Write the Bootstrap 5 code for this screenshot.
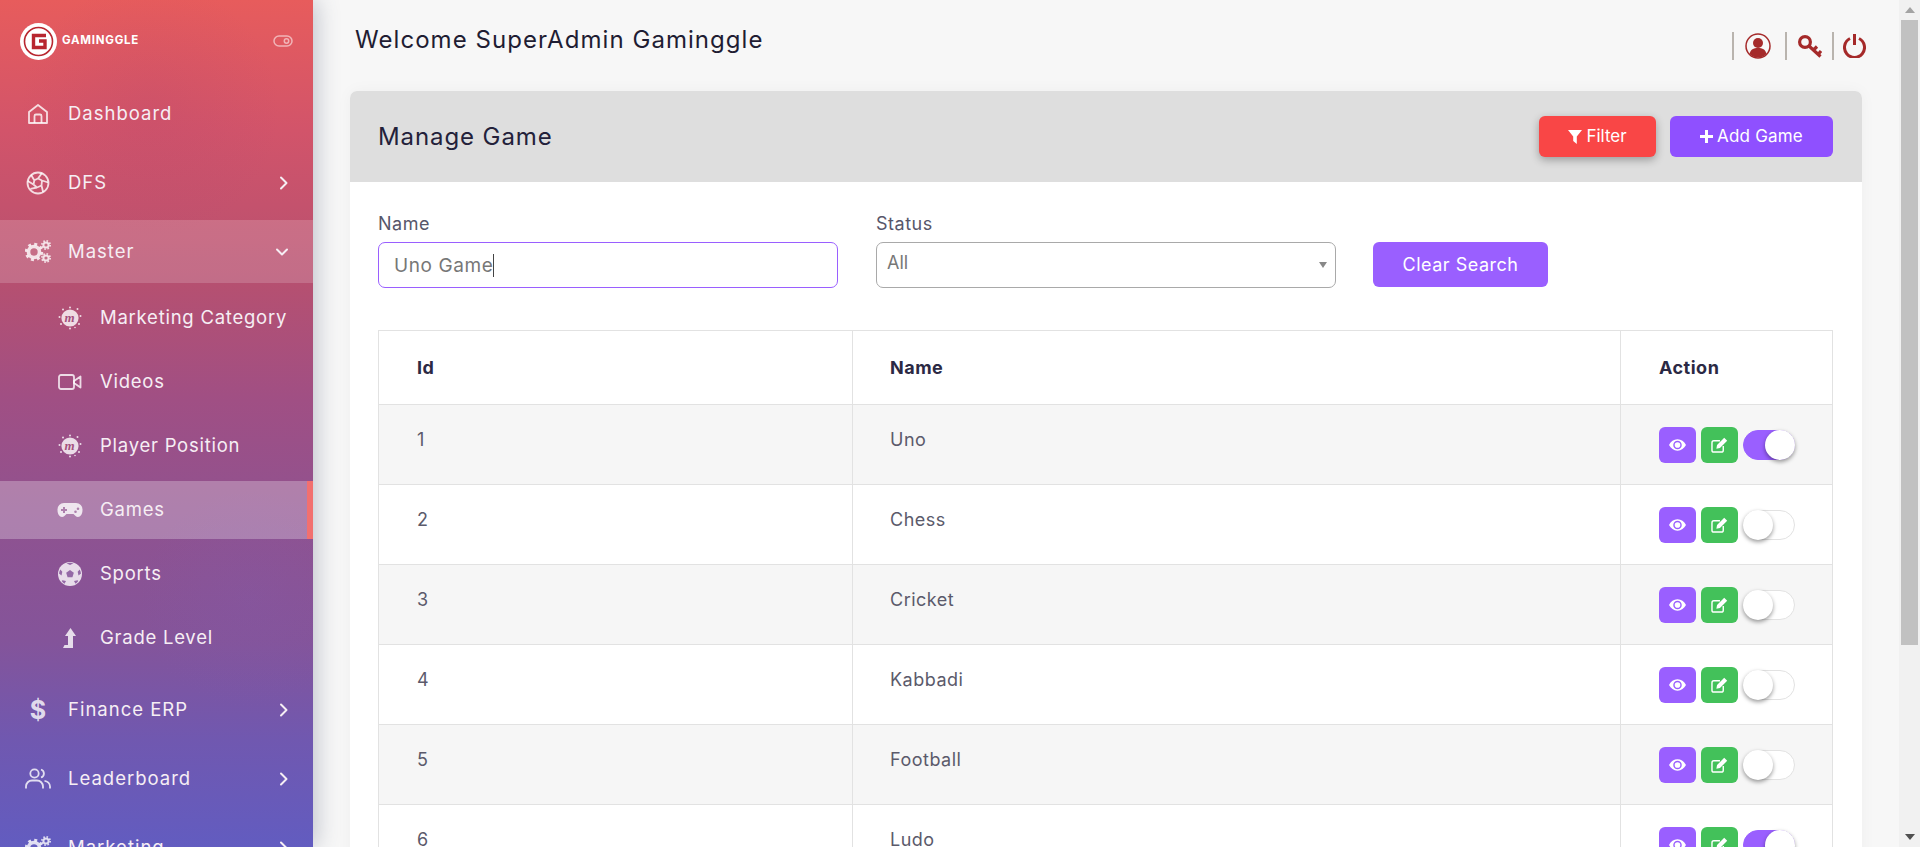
<!DOCTYPE html>
<html lang="en">
<head>
  <meta charset="UTF-8" />
  <meta name="viewport" content="width=device-width, initial-scale=1.0"/>
  <title>Manage Game</title>
  <link href="https://cdn.jsdelivr.net/npm/bootstrap@5.3.0/dist/css/bootstrap.min.css" rel="stylesheet"/>
  <style>
    html, body { height: 100%; overflow: hidden; }
    body {
      font-family: "Inter", "Open Sans", sans-serif;
      background: #f7f7f7;
      color: #5b5a6b;
      font-size: 18px;
    }
    .side-bar {
      width: 313px;
      flex: 0 0 313px;
      color: #f6eef4;
      z-index: 2;
      box-shadow: 3px 0 22px rgba(70, 80, 110, .32);
      background:
        radial-gradient(circle at 150px 110px, rgba(180, 70, 110, .22), transparent 130px),
        radial-gradient(circle at 250px 600px, rgba(130, 90, 170, .25), transparent 110px),
        linear-gradient(180deg, #e75c5c 0, #d2546a 130px, #b65070 280px, #a04f84 400px, #8f5290 520px, #84549a 640px, #7058b0 740px, #625cc0 847px);
    }
    .brand-row { height: 82px; padding: 0 20px 0 20px; }
    .brand-name { font-weight: 700; font-size: 11.5px; letter-spacing: .75px; color: #fff; margin-left: 5px; margin-top: -1px; }
    .side-item {
      height: 63px;
      margin-bottom: 6px;
      padding: 0 24px 0 24px;
      font-size: 18.5px;
      letter-spacing: 1px;
    }
    .side-item.is-open { background: rgba(255, 255, 255, .17); }
    .side-ico { width: 28px; height: 28px; margin-right: 16px; color: rgba(255, 255, 255, .8); flex: none; }
    .side-ico svg { display: block; margin: auto; }
    .dollar { font-weight: 700; font-size: 25px; line-height: 28px; justify-content: center; letter-spacing: 0; }
    .side-sub { margin-bottom: 5px; }
    .sub-item {
      height: 58px;
      margin-bottom: 6px;
      padding-left: 56px;
      font-size: 18.5px;
      letter-spacing: .75px;
    }
    .sub-item.is-on { background: rgba(255, 255, 255, .27); border-right: 6px solid #f2706f; }
    .sub-item .side-ico { margin-right: 16px; }

    .main-pane { min-width: 0; padding: 0 37px; }
    .top-bar { height: 91px; padding: 0 0 0 5px; }
    .welcome { font-size: 24px; color: #1f1d33; margin: 0; padding-top: 26px; font-weight: 400; letter-spacing: 1.05px; }
    .top-tools { padding-top: 32px; margin-right: -4px; }
    .tool-sep { width: 2px; height: 28px; background: #b9b4ae; }
    .tool-user { margin-left: 11px; }
    .tool-sep.after-user { margin-left: 14px; }
    .tool-key { margin-left: 11px; }
    .tool-sep.after-key { margin-left: 10px; }
    .tool-power { margin-left: 9px; }
    .game-card { border: 0; border-radius: 7px; box-shadow: 0 0 16px rgba(0, 0, 0, .04); }
    .game-head { height: 91px; background: #dedede; padding: 0 29px 0 28px; border-radius: 7px 7px 0 0; }
    .game-title { font-size: 24px; font-weight: 400; color: #23213a; margin: 0; padding-top: 2px; letter-spacing: .9px; }
    .head-btn, .clear-btn {
      border: 0;
      color: #fff;
      border-radius: 6px;
      font-size: 17px;
      height: 41px;
      padding: 0;
    }
    .btn-filter { width: 117px; background: #f94646; box-shadow: 0 3px 9px rgba(0, 0, 0, .3); }
    .btn-add { width: 163px; background: #8f50ff; margin-left: 14px; letter-spacing: .2px; }
    .game-body { padding: 31px 29px 0 28px; }
    .filter-row { height: 117px; }
    .filter-label { font-size: 18px; margin-bottom: 7px; line-height: 22px; color: #57566a; letter-spacing: .5px; }
    .name-col { width: 460px; margin-right: 38px; }
    .status-col { width: 460px; margin-right: 37px; }
    .name-field { position: relative; }
    .name-input {
      height: 46px;
      border: 1.5px solid #9a5fff;
      border-radius: 7px;
      padding: 0 15px;
      font-size: 19px;
      letter-spacing: .6px;
      color: #777;
    }
    .fake-caret { position: absolute; left: 115px; top: 12px; width: 1px; height: 23px; background: #444; }
    .status-select {
      height: 46px;
      border: 1px solid #a9a9a9;
      border-radius: 7px;
      padding: 0 10px 6px;
      font-size: 18px;
      color: #777;
      background-image: url("data:image/svg+xml,%3Csvg xmlns='http://www.w3.org/2000/svg' viewBox='0 0 8 6'%3E%3Cpath fill='%23888' d='M0 0h8L4 6z'/%3E%3C/svg%3E");
      background-size: 8px 6px;
      background-position: right 8px center;
    }
    .clear-btn { width: 175px; height: 45px; background: #9a5fff; margin-top: 29px; font-size: 18px; letter-spacing: .5px; }

    .game-table {
      --bs-table-striped-bg: #f6f6f6;
      --bs-table-striped-color: #5b5a6b;
      --bs-table-border-color: #e2e2e2;
      --bs-table-color: #5b5a6b;
      table-layout: fixed;
      margin: 0;
      width: 1454px;
    }
    .game-table th { height: 74px; padding: 0 37px; vertical-align: middle; font-weight: 700; font-size: 18px; letter-spacing: .5px; color: #2b2944; }
    .game-table td { height: 80px; padding: 23px 37px 0; vertical-align: top; font-size: 18px; letter-spacing: .5px; line-height: 24px; }
    .game-table th:first-child, .game-table td:first-child { padding-left: 38px; }
    .game-table th:last-child { padding-left: 38px; }
    .game-table td.act-cell { padding: 0 0 0 38px; vertical-align: middle; }
    .act-btn { width: 37px; height: 36px; border-radius: 6px; margin-right: 5px; flex: none; }
    .act-view { background: #9a5fff; }
    .act-edit { background: #43c15a; }
    .sw-track { width: 52px; height: 30px; border-radius: 15px; border: 1px solid #e2e2e2; background: #fff; }
    .sw-knob { width: 30px; height: 30px; margin: -1px; border-radius: 50%; background: #fff; box-shadow: 0 2px 4px rgba(0, 0, 0, .4); }
    .sw-track.is-on { background: #9a5fff; border-color: #9a5fff; justify-content: flex-end; }

    .fake-scroll { width: 21px; flex: 0 0 21px; background: #f1f1f1; padding-right: 2px; padding-left: 2px; }
    .scroll-up, .scroll-down { height: 20px; }
    .scroll-thumb { height: 625px; background: #c1c1c1; }
  </style>
</head>
<body class="d-flex">
  <svg width="0" height="0" class="position-absolute">
    <defs>
      <symbol id="i-gears" viewBox="0 0 26 23">
        <circle cx="9" cy="12" r="5.5" fill="none" stroke="currentColor" stroke-width="3.6"/>
        <circle cx="9" cy="12" r="8" fill="none" stroke="currentColor" stroke-width="2.4" stroke-dasharray="3 3.28"/>
        <circle cx="21" cy="5" r="2.6" fill="none" stroke="currentColor" stroke-width="2"/>
        <circle cx="21" cy="5" r="4.2" fill="none" stroke="currentColor" stroke-width="1.6" stroke-dasharray="1.6 1.7"/>
        <circle cx="21" cy="18" r="2.6" fill="none" stroke="currentColor" stroke-width="2"/>
        <circle cx="21" cy="18" r="4.2" fill="none" stroke="currentColor" stroke-width="1.6" stroke-dasharray="1.6 1.7"/>
      </symbol>
      <symbol id="i-splat" viewBox="0 0 24 24">
        <circle cx="12" cy="12" r="8.6" fill="currentColor"/>
        <g fill="currentColor">
          <circle cx="12" cy="1.5" r="1"/><circle cx="5" cy="3.5" r="1"/><circle cx="19.5" cy="3" r="1"/>
          <circle cx="1.5" cy="11" r="1"/><circle cx="22.5" cy="10" r="1"/><circle cx="3" cy="18" r="1"/>
          <circle cx="21" cy="18" r="1"/><circle cx="12" cy="22.5" r="1"/><circle cx="17" cy="21.5" r=".8"/>
        </g>
        <text x="12" y="16" text-anchor="middle" font-family="Liberation Serif, serif" font-style="italic" font-weight="700" font-size="13" fill="#a4507e">m</text>
      </symbol>
      <symbol id="i-chev-r" viewBox="0 0 10 14">
        <path d="M2 1.5 7.5 7 2 12.5" fill="none" stroke="currentColor" stroke-width="2" stroke-linecap="round" stroke-linejoin="round"/>
      </symbol>
      <symbol id="i-eye" viewBox="0 0 18 12">
        <path fill="currentColor" fill-rule="evenodd" d="M9 0C5 0 2 2.4 0 6c2 3.6 5 6 9 6s7-2.400 9-6c-2-3.600-5-6-9-6zm0 1.500a4.500 4.500 0 1 1 0 9 4.500 4.500 0 0 1 0-9z"/>
        <circle cx="9" cy="6" r="3" fill="currentColor"/>
      </symbol>
      <symbol id="i-edit" viewBox="0 0 18 17">
        <path d="M13 9.500V14a2 2 0 0 1-2 2H3a2 2 0 0 1-2-2V6a2 2 0 0 1 2-2h6.500" fill="none" stroke="currentColor" stroke-width="1.500"/>
        <path fill="currentColor" d="M14 .8 17.200 4 9.500 11.800l-3.800.7.700-3.900z"/>
      </symbol>
    </defs>
  </svg>

  <aside class="side-bar d-flex flex-column overflow-hidden">
    <div class="brand-row d-flex align-items-center flex-shrink-0">
      <svg width="37" height="37" viewBox="0 0 37 37">
        <circle cx="18.500" cy="18.500" r="18.500" fill="#fff"/>
        <circle cx="18.500" cy="18.500" r="14" fill="none" stroke="#b8262f" stroke-width="1.600"/>
        <path d="M26 12.500H13.500v12H25v-6.500h-6" fill="none" stroke="#b8262f" stroke-width="3.400"/>
      </svg>
      <span class="brand-name">GAMINGGLE</span>
      <svg class="ms-auto" width="20" height="12" viewBox="0 0 20 12">
        <rect x="1" y="1" width="18" height="10" rx="5" fill="none" stroke="#fff" stroke-opacity=".55" stroke-width="1.500"/>
        <circle cx="13.500" cy="6" r="2.200" fill="none" stroke="#fff" stroke-opacity=".55" stroke-width="1.500"/>
      </svg>
    </div>

    <div class="side-item d-flex align-items-center flex-shrink-0">
      <span class="side-ico d-flex"><svg width="22" height="22" viewBox="0 0 22 22" fill="none" stroke="currentColor" stroke-width="1.800"><path d="M2 20V9l9-7 9 7v11z" stroke-linejoin="round"/><path d="M7.500 20v-7a1.500 1.500 0 0 1 1.500-1.500h4a1.500 1.500 0 0 1 1.500 1.500v7"/></svg></span>
      Dashboard
    </div>
    <div class="side-item d-flex align-items-center flex-shrink-0">
      <span class="side-ico d-flex"><svg width="24" height="24" viewBox="0 0 24 24" fill="none" stroke="currentColor" stroke-width="1.800"><circle cx="12" cy="12" r="10.500"/><path d="M12 7.500 16 1.900M16 9.500l6.200 2M15.500 14.500l1.600 6.500M11 16.500l-6.500 1.300M7.500 13.500 1.800 10M8.300 9.300 5 3.800M12 7.500 8.300 9.300M16 9.500 12 7.500M15.500 14.500l.5-5M11 16.500l4.500-2M7.500 13.500l3.500 3M8.300 9.300l-.8 4.200"/></svg></span>
      DFS
      <svg class="ms-auto" width="10" height="14"><use href="#i-chev-r"/></svg>
    </div>
    <div class="side-item is-open d-flex align-items-center flex-shrink-0">
      <span class="side-ico d-flex"><svg width="26" height="23"><use href="#i-gears"/></svg></span>
      Master
      <svg class="ms-auto" width="14" height="10" viewBox="0 0 14 10"><path d="M2 2.500 7 7.500l5-5" fill="none" stroke="currentColor" stroke-width="2" stroke-linecap="round" stroke-linejoin="round"/></svg>
    </div>

    <div class="side-sub flex-shrink-0">
      <div class="sub-item d-flex align-items-center">
        <span class="side-ico d-flex"><svg width="24" height="24"><use href="#i-splat"/></svg></span>
        Marketing Category
      </div>
      <div class="sub-item d-flex align-items-center">
        <span class="side-ico d-flex"><svg width="24" height="18" viewBox="0 0 24 18" fill="none" stroke="currentColor" stroke-width="1.800"><rect x="1" y="2" width="15" height="14" rx="2"/><path d="M16 8l6.500-4.500v11L16 10z" stroke-linejoin="round"/></svg></span>
        Videos
      </div>
      <div class="sub-item d-flex align-items-center">
        <span class="side-ico d-flex"><svg width="24" height="24"><use href="#i-splat"/></svg></span>
        Player Position
      </div>
      <div class="sub-item is-on d-flex align-items-center">
        <span class="side-ico d-flex"><svg width="26" height="16" viewBox="0 0 26 16"><path fill="currentColor" fill-rule="evenodd" d="M7 1h12a6.500 6.500 0 0 1 6.500 7c0 4-2 7-4.500 7-2 0-3-1.500-4.500-3h-7C8 13.500 7 15 5 15 2.500 15 .5 12 .5 8A6.500 6.500 0 0 1 7 1zm-1 4v2H4v2h2v2h2V9h2V7H8V5zm12.500 3.500a1.300 1.300 0 1 0 0 2.600 1.300 1.300 0 0 0 0-2.600zm2.500-3a1.300 1.300 0 1 0 0 2.600 1.300 1.300 0 0 0 0-2.600z"/></svg></span>
        Games
      </div>
      <div class="sub-item d-flex align-items-center">
        <span class="side-ico d-flex"><svg width="24" height="24" viewBox="0 0 24 24"><circle cx="12" cy="12" r="12" fill="currentColor"/><g fill="#85549a" fill-opacity=".85"><path d="M12 8l3.800 2.800-1.400 4.500H9.600L8.200 10.800z"/><path d="M8.500 1.200 12 3l3.500-1.800A11.500 11.500 0 0 0 8.500 1.200zM1 11.500l2.500 2 .8-3.700-2-2.400A11.500 11.500 0 0 0 1 11.500zM23 11.500a11.500 11.500 0 0 0-1.300-4.100l-2 2.400.8 3.700zM6.500 21.700l1.500-2.600-3.500-.8-.8.600a11.500 11.500 0 0 0 2.800 2.800zM17.500 21.700a11.500 11.500 0 0 0 2.800-2.800l-.8-.6-3.500.8z"/></g></svg></span>
        Sports
      </div>
      <div class="sub-item d-flex align-items-center">
        <span class="side-ico d-flex"><svg width="16" height="20" viewBox="0 0 16 20"><path fill="currentColor" d="M1 20l1.500-3H6V8H3l5.500-8L14 8h-3v12z"/></svg></span>
        Grade Level
      </div>
    </div>

    <div class="side-item d-flex align-items-center flex-shrink-0">
      <span class="side-ico dollar d-flex">$</span>
      Finance ERP
      <svg class="ms-auto" width="10" height="14"><use href="#i-chev-r"/></svg>
    </div>
    <div class="side-item d-flex align-items-center flex-shrink-0">
      <span class="side-ico d-flex"><svg width="26" height="21" viewBox="0 0 26 21" fill="none" stroke="currentColor" stroke-width="1.800"><circle cx="9.500" cy="5.500" r="4.200"/><path d="M1 20.500v-2A6 6 0 0 1 7 12.500h5a6 6 0 0 1 6 6v2M16 1.500a4.200 4.200 0 0 1 0 8M19.500 12.800a6 6 0 0 1 5.500 5.700v2"/></svg></span>
      Leaderboard
      <svg class="ms-auto" width="10" height="14"><use href="#i-chev-r"/></svg>
    </div>
    <div class="side-item d-flex align-items-center flex-shrink-0">
      <span class="side-ico d-flex"><svg width="26" height="23"><use href="#i-gears"/></svg></span>
      Marketing
      <svg class="ms-auto" width="10" height="14"><use href="#i-chev-r"/></svg>
    </div>
  </aside>

  <main class="main-pane flex-grow-1 overflow-hidden">
    <header class="top-bar d-flex justify-content-between align-items-start">
      <h1 class="welcome">Welcome SuperAdmin Gaminggle</h1>
      <div class="top-tools d-flex align-items-center">
        <span class="tool-sep"></span>
        <svg class="tool-user" width="26" height="26" viewBox="0 0 26 26"><circle cx="13" cy="13" r="12" fill="none" stroke="#a52a2a" stroke-width="1.500"/><circle cx="13" cy="10" r="5" fill="#a52a2a"/><path fill="#a52a2a" d="M4.500 21c1-4.500 4-6 8.500-6s7.500 1.500 8.500 6a12 12 0 0 1-17 0z"/></svg>
        <span class="tool-sep after-user"></span>
        <svg class="tool-key" width="24" height="23" viewBox="0 0 24 23" fill="none" stroke="#a52a2a" stroke-width="3.200"><circle cx="7" cy="7" r="5.400"/><path d="M11 11l11.500 10.500M15.500 15l3.500-3.500M20 19.500l3-3.500"/></svg>
        <span class="tool-sep after-key"></span>
        <svg class="tool-power" width="23" height="24" viewBox="0 0 23 24" fill="none" stroke="#a52a2a" stroke-width="3"><path d="M7 4.500a10 10 0 1 0 9 0"/><path d="M11.500 0v11"/></svg>
      </div>
    </header>

    <section class="card game-card">
      <div class="game-head d-flex align-items-center justify-content-between">
        <h2 class="game-title">Manage Game</h2>
        <div class="d-flex">
          <button class="btn head-btn btn-filter d-flex align-items-center justify-content-center gap-1" type="button">
            <svg width="14" height="14" viewBox="0 0 14 14"><path fill="#fff" d="M0 0h14L8.800 6.500V14L5.200 11V6.500z"/></svg>Filter
          </button>
          <button class="btn head-btn btn-add d-flex align-items-center justify-content-center gap-1" type="button">
            <svg width="13" height="13" viewBox="0 0 13 13"><path fill="#fff" d="M5 0h3v5h5v3H8v5H5V8H0V5h5z"/></svg>Add Game
          </button>
        </div>
      </div>

      <div class="game-body">
        <div class="filter-row d-flex align-items-start">
          <div class="name-col">
            <label class="filter-label d-block" for="nameInput">Name</label>
            <div class="name-field">
              <input id="nameInput" type="text" class="form-control name-input" value="Uno Game">
              <span class="fake-caret"></span>
            </div>
          </div>
          <div class="status-col">
            <label class="filter-label d-block" for="statusSelect">Status</label>
            <select id="statusSelect" class="form-select status-select">
              <option>All</option>
            </select>
          </div>
          <button class="btn clear-btn" type="button">Clear Search</button>
        </div>

        <table class="table table-bordered table-striped game-table">
          <colgroup><col style="width: 474px"><col style="width: 768px"><col style="width: 212px"></colgroup>
          <thead>
            <tr><th>Id</th><th>Name</th><th>Action</th></tr>
          </thead>
          <tbody id="gameRows"></tbody>
        </table>
      </div>
    </section>
  </main>

  <div class="fake-scroll d-flex flex-column flex-shrink-0">
    <div class="scroll-up d-flex align-items-center justify-content-center"><svg width="10" height="6" viewBox="0 0 10 6"><path fill="#a3a3a3" d="M5 0l5 6H0z"/></svg></div>
    <div class="scroll-thumb"></div>
    <div class="scroll-down mt-auto d-flex align-items-center justify-content-center"><svg width="10" height="6" viewBox="0 0 10 6"><path fill="#505050" d="M0 0h10L5 6z"/></svg></div>
  </div>

  <script src="https://cdn.jsdelivr.net/npm/bootstrap@5.3.0/dist/js/bootstrap.bundle.min.js"></script>
  <script>
    const games = [
      [1, 'Uno', true], [2, 'Chess', false], [3, 'Cricket', false],
      [4, 'Kabbadi', false], [5, 'Football', false], [6, 'Ludo', true]
    ];
    document.getElementById('gameRows').innerHTML = games.map(([id, name, on]) => `
      <tr>
        <td>${id}</td>
        <td>${name}</td>
        <td class="act-cell">
          <div class="d-flex align-items-center">
            <span class="act-btn act-view d-flex align-items-center justify-content-center text-white"><svg width="17" height="12"><use href="#i-eye"/></svg></span>
            <span class="act-btn act-edit d-flex align-items-center justify-content-center text-white"><svg width="17" height="16"><use href="#i-edit"/></svg></span>
            <span class="sw-track d-flex ${on ? 'is-on' : ''}"><span class="sw-knob"></span></span>
          </div>
        </td>
      </tr>`).join('');
  </script>
</body>
</html>
